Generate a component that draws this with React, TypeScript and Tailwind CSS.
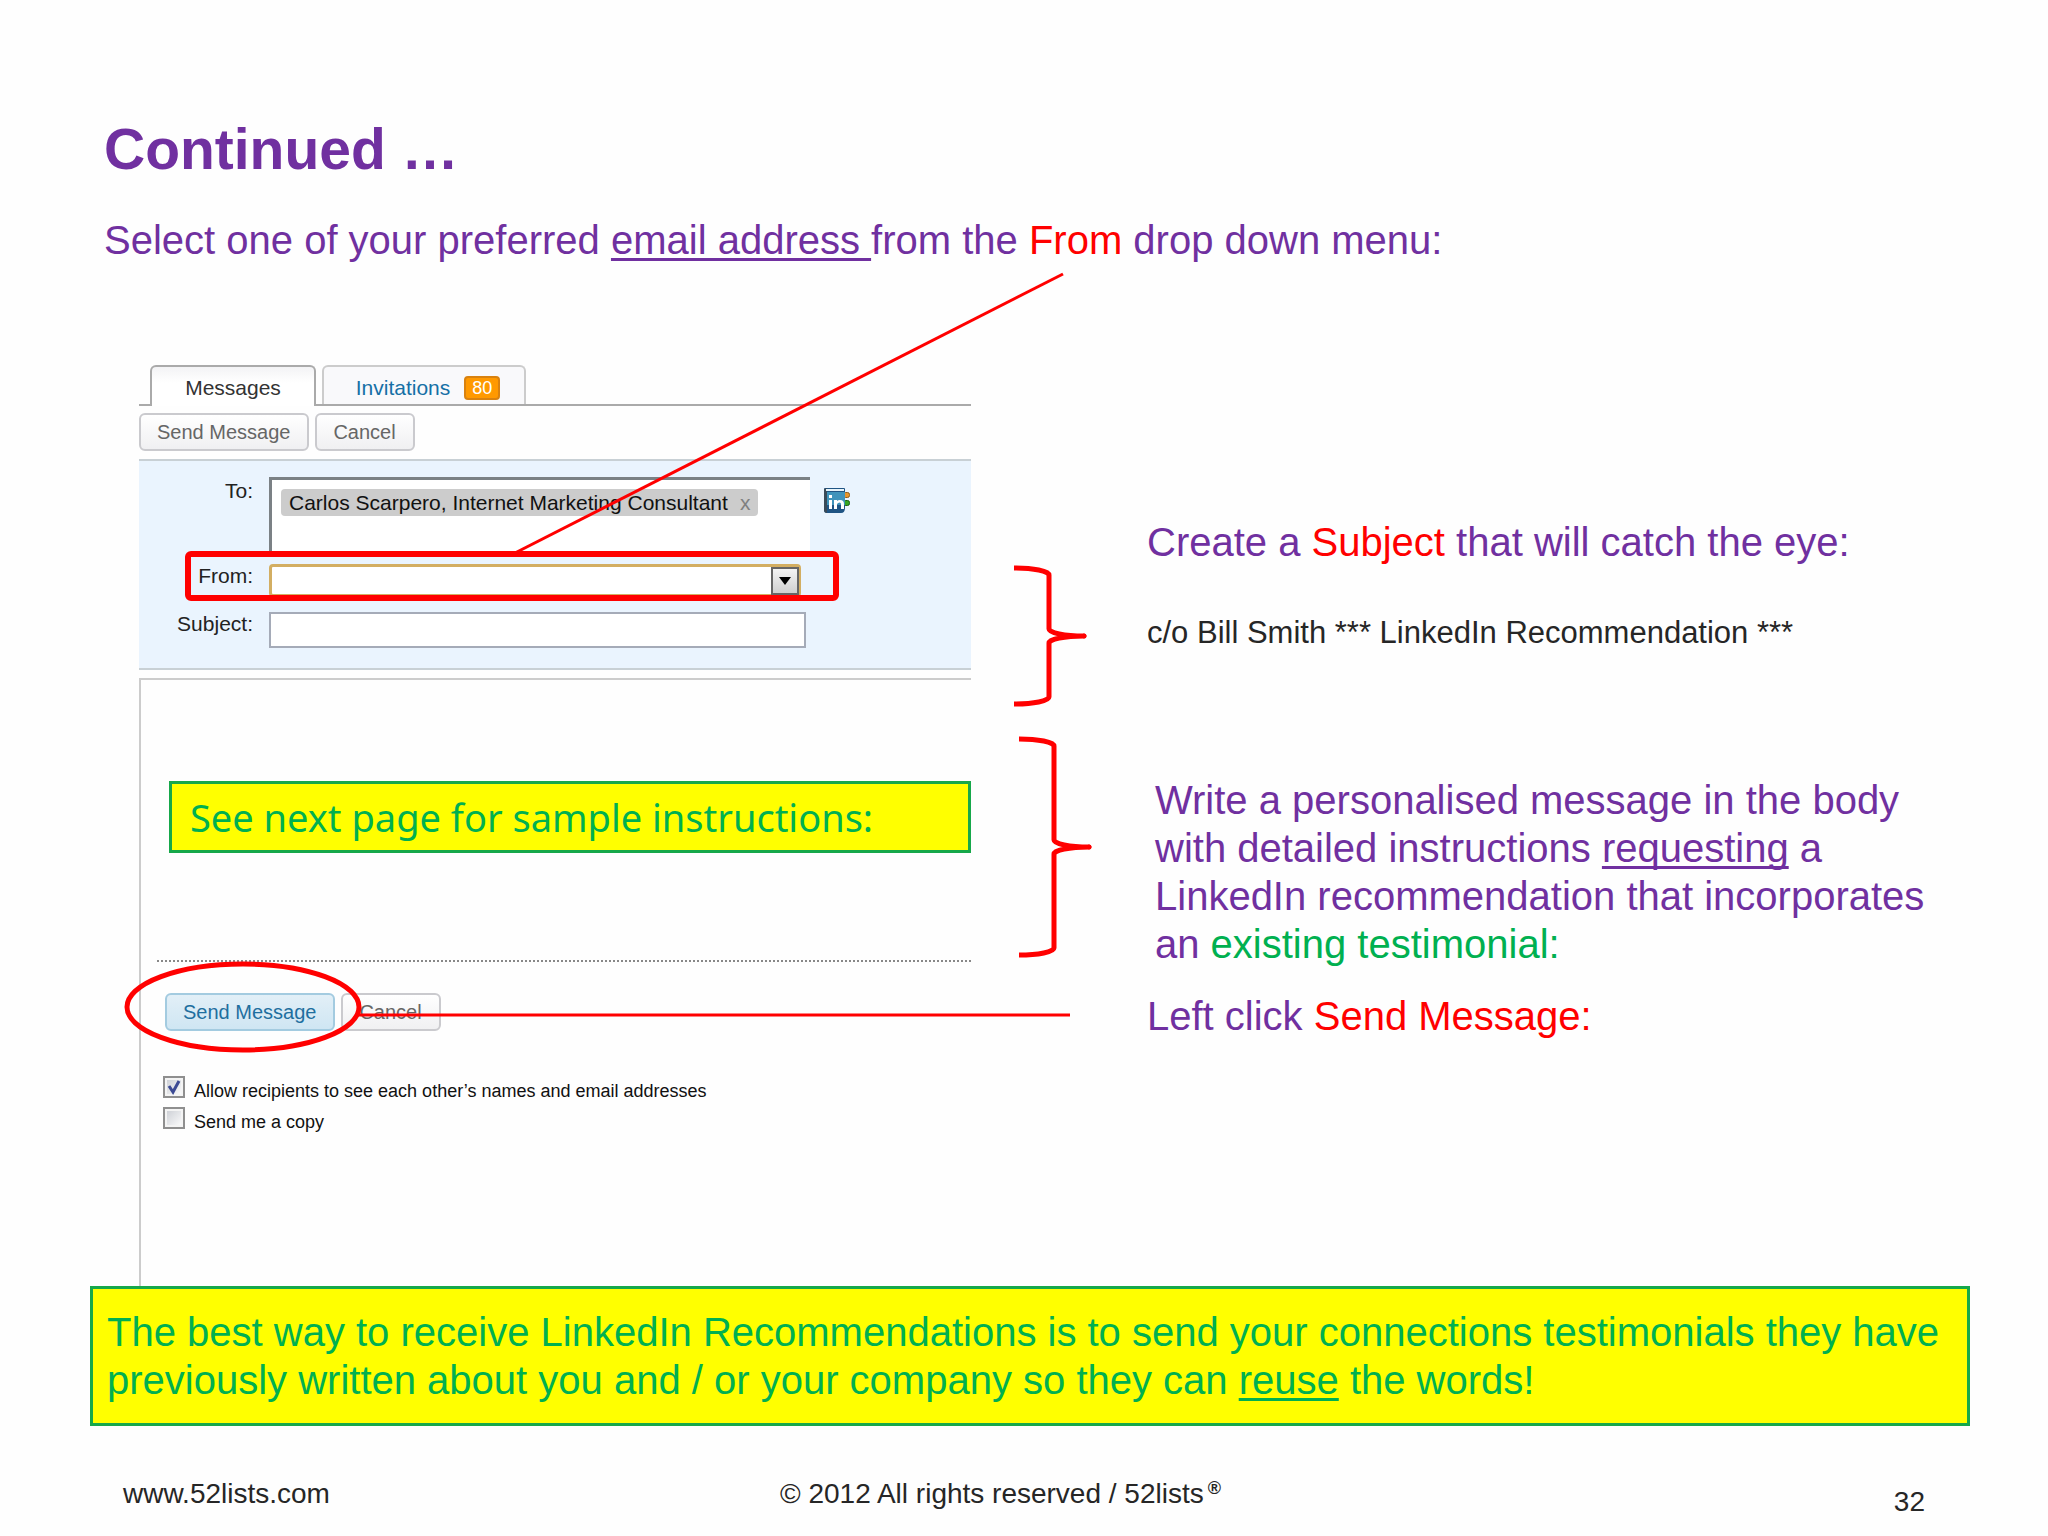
import type { ReactNode } from 'react'

function Red({ children }: { children: ReactNode }) {
  return <span className="text-[#ff0000]">{children}</span>
}

function Underlined({ children }: { children: ReactNode }) {
  return <span className="underline decoration-3 underline-offset-4 [text-decoration-skip-ink:none]">{children}</span>
}

type ButtonProps = {
  label: string
  primary?: boolean
}

function FormButton({ label, primary = false }: ButtonProps) {
  return (
    <button
      type="button"
      className={`h-[38px] rounded-md border-2 pr-[17px] pl-4 text-[20px] leading-6 ${
        primary
          ? 'border-[#a3cbe0] bg-linear-to-b from-[#e2eff7] to-[#cfe6f3] text-[#1f6f9f]'
          : 'border-[#cacace] bg-linear-to-b from-white to-[#f0f0f2] text-[#666666]'
      }`}
    >
      {label}
    </button>
  )
}

// Curly bracket that opens to the left and points at the note beside it
function Brace({ height }: { height: number }) {
  const mid = height / 2
  return (
    <svg width="76" height={height} fill="none" stroke="#ff0000" strokeWidth="5" strokeLinejoin="round" aria-hidden="true">
      <path
        d={`M0 3 A35 7 0 0 1 35 10 V${mid - 7} A35 7 0 0 0 70 ${mid} A35 7 0 0 0 35 ${mid + 7} V${height - 10} A35 7 0 0 1 0 ${height - 3}`}
      />
      <circle cx="70" cy={mid} r="2" fill="#ff0000" stroke="#ff0000" strokeWidth="1" />
    </svg>
  )
}

function AddressBookIcon() {
  return (
    <svg width="27" height="27" viewBox="0 0 27 27" aria-hidden="true">
      <rect x="19.500" y="5.500" width="6" height="5" rx="2" fill="#e8952a" stroke="#8a5a18" />
      <rect x="19.500" y="13.500" width="6" height="5" rx="2" fill="#35a524" stroke="#1d5c14" />
      <path d="M1 1h19q1 0 1 1v19q0 5-4 5H3q-3 0-3-3V2q0-1 1-1z" fill="#1f5484" />
      <path d="M0 2l3-1v25q-3 0-3-3z" fill="#3a4a58" />
      <path d="M3 5h18v13H3z" fill="#3f93bb" />
      <path d="M2 2h18v2H2z" fill="#e8f4fa" />
      <path d="M5 8h3v3H5zM5 13h3v9H5zM10 13h3v1q1-1 3-1q4 0 4 4v5h-3v-5q0-1.500-1.500-1.500T13 17v5h-3z" fill="#fff" />
    </svg>
  )
}

function Tabs() {
  return (
    <div className="flex items-end gap-1.5 border-b-2 border-[#aaaaaa] pl-[11px] text-[21px] leading-6">
      <button
        type="button"
        className="-mb-[2px] h-[41px] w-[166px] rounded-t-md border-2 border-b-0 border-[#aaaaaa] bg-linear-to-b from-[#f3f3f5] to-white to-40% pt-0.5 text-[#333333]"
      >
        Messages
      </button>
      <button
        type="button"
        className="flex h-[39px] w-[204px] items-center justify-center gap-3.5 rounded-t-md border-2 border-b-0 border-[#cccccc] bg-[#f9f9fb] pt-1 pl-2 text-[#1570a6]"
      >
        Invitations
        <span className="rounded-sm border-2 border-[#d9820f] bg-[#ff9900] px-1.5 text-[18px] leading-5 text-white">80</span>
      </button>
    </div>
  )
}

function Recipients() {
  return (
    <div className="border-y-2 border-[#c8d0d5] bg-[#eaf4fe] pt-4 pb-5 text-[21px] leading-6 text-[#222222]">
      <div className="flex gap-4">
        <span className="w-[114px] pt-[2px] text-right">To:</span>
        <div className="h-[75px] w-[541px] border-t-3 border-l-3 border-[#7b8185] bg-white pt-[9px] pl-[9px]">
          <span className="inline-flex h-[27px] items-center gap-3 rounded-sm bg-[#cccccc] px-2 text-[#111111]">
            Carlos Scarpero, Internet Marketing Consultant
            <button type="button" aria-label="Remove recipient" className="text-[#808080]">x</button>
          </span>
        </div>
        <button type="button" aria-label="Address book" className="-ml-0.5 mt-2.5 h-[27px]">
          <AddressBookIcon />
        </button>
      </div>

      <div className="relative mt-3 flex gap-4">
        <label htmlFor="from" className="w-[114px] text-right">From:</label>
        <div className="relative h-[33px] w-[532px]">
          <select id="from" className="h-full w-full appearance-none rounded-sm border-3 border-[#d3ae62] bg-white" />
          <span className="pointer-events-none absolute top-[3px] right-[2px] flex h-[28px] w-[28px] items-center justify-center border-2 border-[#666666] bg-linear-to-b from-[#f4f4f4] to-[#d0d0d0]">
            <svg width="12" height="8" aria-hidden="true">
              <path d="M0 0h12l-6 8z" fill="#000" />
            </svg>
          </span>
        </div>
        {/* Highlight round the drop down */}
        <span className="pointer-events-none absolute -top-[13px] left-[46px] h-[50px] w-[654px] rounded-md border-[6px] border-[#ff0000]" />
      </div>

      <div className="mt-[15px] flex gap-4">
        <label htmlFor="subject" className="w-[114px] text-right">Subject:</label>
        <input id="subject" type="text" className="h-[36px] w-[537px] border-2 border-[#a5abb8] bg-white px-2" />
      </div>
    </div>
  )
}

type OptionProps = {
  id: string
  label: string
  checked?: boolean
}

function Option({ id, label, checked = false }: OptionProps) {
  return (
    <div className="flex h-[31px] gap-[9px]">
      <span className="relative h-[22px] w-[22px]">
        <input
          id={id}
          type="checkbox"
          defaultChecked={checked}
          className="peer block h-[22px] w-[22px] appearance-none border-2 border-[#8f8f8f] bg-linear-to-br from-[#c9ccd2] to-white shadow-[inset_0_0_0_2px_#f4f4f4]"
        />
        <svg className="pointer-events-none absolute inset-0 hidden peer-checked:block" width="22" height="22" fill="none" aria-hidden="true">
          <path d="M6 10l4 6l6-11" stroke="#3c4a94" strokeWidth="3" />
        </svg>
      </span>
      <label htmlFor={id} className="pt-[5px] text-[18px] leading-5 text-[#111111]">{label}</label>
    </div>
  )
}

function MessageForm() {
  return (
    <form className="mt-[102px] flex w-[832px] flex-col">
      <Tabs />
      <div className="flex gap-1.5 pt-[7px] pb-2">
        <FormButton label="Send Message" />
        <FormButton label="Cancel" />
      </div>
      <Recipients />
      <div className="mt-2 flex-1 border-t-2 border-l-2 border-[#cccccc] pt-[101px]">
        <p className="ml-7 border-3 border-[#16a84a] bg-[#ffff00] py-[9px] pl-[18px] font-['Noto_Sans',sans-serif] text-[38px] leading-[48px] text-[#00b050]">
          See next page for sample instructions:
        </p>
        <div className="mt-[107px] ml-4 border-t-2 border-dotted border-[#888888]" />
        <div className="mt-[31px] ml-6 flex gap-1.5">
          <FormButton label="Send Message" primary />
          <FormButton label="Cancel" />
        </div>
        <div className="mt-[45px] ml-[22px] pb-[148px]">
          <Option id="allow" label="Allow recipients to see each other’s names and email addresses" checked />
          <Option id="copy" label="Send me a copy" />
        </div>
      </div>
    </form>
  )
}

function Notes() {
  return (
    <div className="flex-1 pt-[255px] pl-[52px] text-[40px] leading-[48px]">
      <p>
        Create a <Red>Subject</Red> that will catch the eye:
      </p>
      <p className="mt-[47px] text-[31px] leading-10 text-[#262626]">c/o Bill Smith *** LinkedIn Recommendation ***</p>
      <p className="mt-[123px] max-w-[800px] pl-2">
        Write a personalised message in the body with detailed instructions <Underlined>requesting</Underlined> a
        LinkedIn recommendation that incorporates an <span className="text-[#00b050]">existing testimonial:</span>
      </p>
      <p className="mt-6">
        Left click <Red>Send Message:</Red>
      </p>
    </div>
  )
}

function App() {
  return (
    <main className="min-h-screen bg-[#fefefe] pt-[117px] font-['Liberation_Sans',Arial,sans-serif] text-[#7030a0]">
      <h1 className="ml-[104px] text-[57px] leading-[64px] font-bold">Continued …</h1>
      <p className="mt-[35px] ml-[104px] text-[40px] leading-[48px]">
        Select one of your preferred <Underlined>email address </Underlined>from the <Red>From</Red> drop down menu:
      </p>

      <section className="relative -mt-px flex pl-[139px]">
        <MessageForm />
        <div className="flex flex-col pt-[302px] pl-[43px]">
          <Brace height={142} />
          <div className="mt-[29px] ml-[5px]">
            <Brace height={222} />
          </div>
        </div>
        <Notes />

        {/* Pointer lines and the ring round the send button */}
        <svg
          className="pointer-events-none absolute top-0 left-0"
          width="1100"
          height="800"
          viewBox="0 263 1100 800"
          fill="none"
          stroke="#ff0000"
          aria-hidden="true"
        >
          <path d="M1063 274L513 554" strokeWidth="3" />
          <path d="M358 1015H1070" strokeWidth="3" />
          <ellipse cx="243" cy="1007" rx="116" ry="43" strokeWidth="5" />
        </svg>
      </section>

      <p className="relative mr-[78px] ml-[90px] border-3 border-[#16a84a] bg-[#ffff00] py-[19px] pr-4 pl-[14px] text-[40px] leading-[48px] text-[#00b050]">
        The best way to receive LinkedIn Recommendations is to send your connections testimonials they have previously
        written about you and / or your company so they can <Underlined>reuse</Underlined> the words!
      </p>

      <footer className="mt-[52px] flex pr-[123px] pl-[123px] text-[28px] leading-8 text-[#262626]">
        <a href="#" className="w-[657px]">www.52lists.com</a>
        <span>
          © 2012 All rights reserved / 52lists<sup className="pl-1 text-[18px] font-bold">®</sup>
        </span>
        <span className="ml-auto pt-2">32</span>
      </footer>
    </main>
  )
}

export default App
